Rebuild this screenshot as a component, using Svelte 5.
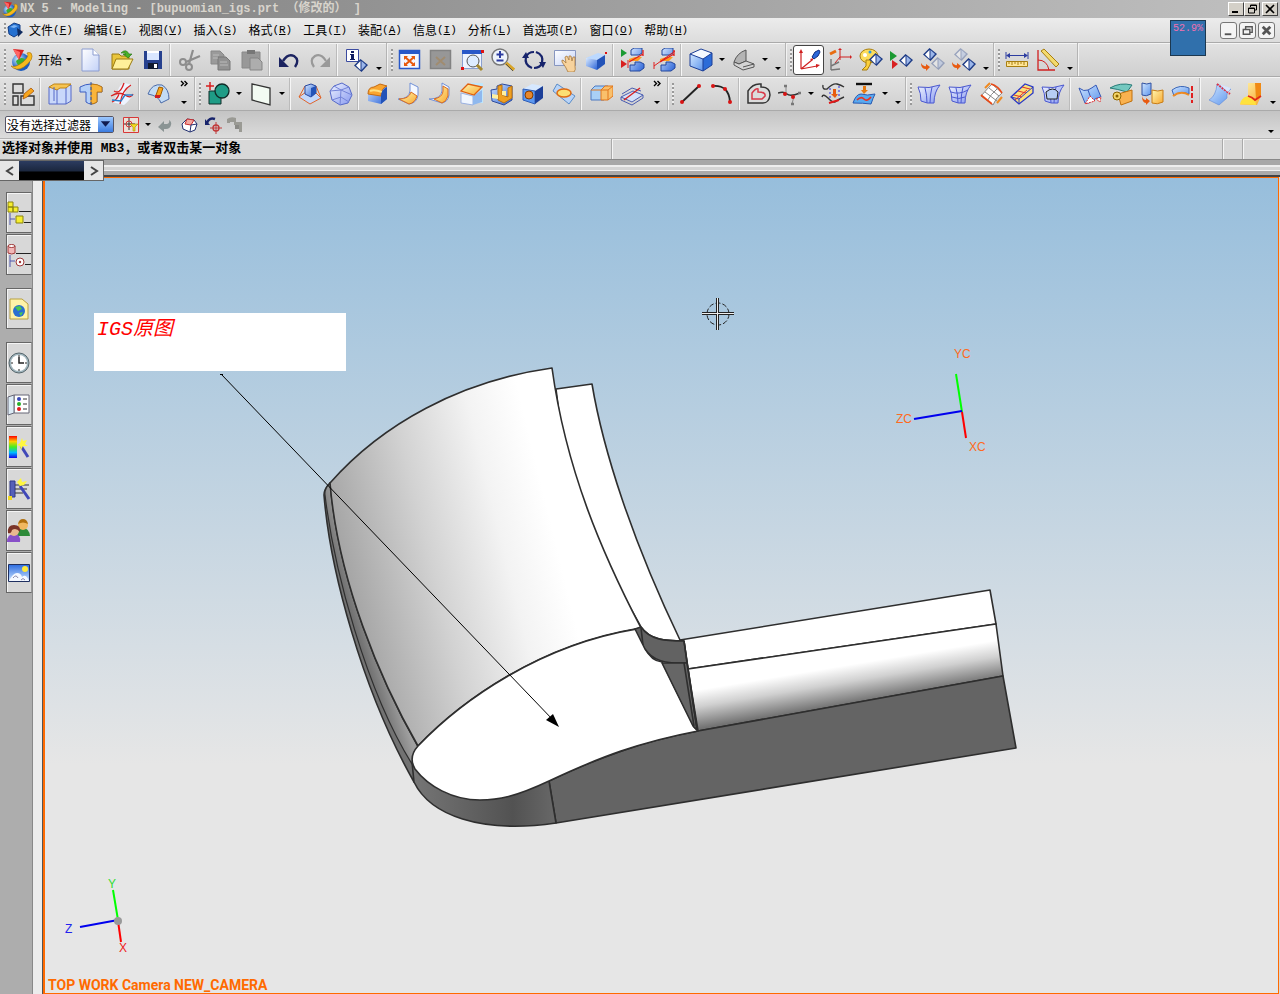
<script lang="ts">
  type Tool = { t: 'btn' | 'sep' | 'drop' | 'end' | 'chev'; name?: string; icon?: string; on?: boolean };

  const menus = [
    ['文件', 'F'], ['编辑', 'E'], ['视图', 'V'], ['插入', 'S'], ['格式', 'R'], ['工具', 'T'],
    ['装配', 'A'], ['信息', 'I'], ['分析', 'L'], ['首选项', 'P'], ['窗口', 'O'], ['帮助', 'H'],
  ];

  const diamond = (x: number, y: number, faded = false) =>
    `<g transform="translate(${x} ${y})" opacity="${faded ? 0.35 : 1}"><path d="M0 6.500L6.500 0L14 6L7.500 13Z" fill="#1d3b86"/><path d="M2 6.500L6.500 2V11Z" fill="#fff"/><path d="M7.500 2L12 6L7.500 11Z" fill="#9bb6ea"/></g>`;
  const clipBody =
    '<path d="M10 2l3-2h8v5l-3 2h-8zM9 17h5v-3h5l4 2v4l-4 3H9z" fill="url(#blue)" stroke="#23469c"/><path d="M8 11l6-2h7l-4 4H8z" fill="#ff9c20"/><path d="M8 14L22 6M22 2v6" stroke="#e02020" stroke-width="1.300"/>';
  const sheet = (more: string) =>
    `<path d="M1 5Q12 7 23 3Q17 10 17 21Q10 22 4 19Q4 11 1 5Z" fill="url(#lilac)" stroke="#4a58d0"/><path d="M8 6Q10 13 10 21M15 5Q13 13 13 21" fill="none" stroke="#4a58d0"/>${more}`;

  const icons: Record<string, string> = {
    start:
      '<circle cx="11" cy="14" r="9" fill="url(#ball)"/><path d="M6 13q4-5 9-2l-3 8q-5-1-6-6z" fill="#38b030"/><path d="M1 18Q6 24 14 19Q25 11 21 5Q19 4 17 5Q20 8 13 14Q5 20 1 18Z" fill="#f6b91c" stroke="#a86c00" stroke-width=".6"/><path d="M3 1l11 1-5 10z" fill="#d81f1f"/><path d="M3 1l7 3-1 8z" fill="#f66"/>',
    create: '<path d="M3 1h11l6 6v16H3z" fill="url(#paper)" stroke="#8b9cd0"/><path d="M14 1v6h6" fill="#fff" stroke="#8b9cd0"/>',
    open: '<path d="M2 21V6h7l2 2h8v13z" fill="#e9c53c" stroke="#9a7a10"/><path d="M2 21L6 11h17l-5 10z" fill="#fff09a" stroke="#9a7a10"/><path d="M11 5q5-5 8 1h3l-4 4-5-4h3q-2-2-5-1z" fill="#46b028" stroke="#237010" stroke-width=".6"/>',
    save: '<path d="M3 3h18v18H3z" fill="#27418e"/><path d="M6 3h12v9H6z" fill="#d9e6ff"/><path d="M6 3h12v2H6z" fill="#fff"/><path d="M7 15h10v6H7z" fill="#111a30"/><path d="M13 16h3v4h-3z" fill="#fff"/>',
    cut: '<path d="M15 2L11 16M22 8L8 14" stroke="#8d8d8d" stroke-width="2.200"/><circle cx="5" cy="14" r="3" fill="none" stroke="#8d8d8d" stroke-width="2"/><circle cx="11" cy="19" r="3" fill="none" stroke="#8d8d8d" stroke-width="2"/>',
    copy: '<path d="M2 3h9l4 4v9H2z" fill="#9a9a9a" stroke="#888"/><path d="M9 9h8l4 4v9H9z" fill="#929292" stroke="#777"/><path d="M4 7h6M4 10h5M11 14h7M11 17h8" stroke="#bbb"/>',
    paste: '<path d="M2 4h18v16H2z" fill="#989898" stroke="#888"/><path d="M7 2h8v4H7z" fill="#777"/><path d="M10 10h8l4 4v8H10z" fill="#adadad" stroke="#858585"/>',
    undo: '<path d="M6 13Q11 5 17 8Q23 12 18 19" fill="none" stroke="#1b2360" stroke-width="2.400"/><path d="M2 9v10h10z" fill="#1b2360"/>',
    redo: '<path d="M18 13Q13 5 7 8Q1 12 6 19" fill="none" stroke="#999" stroke-width="2.200"/><path d="M22 9v10H12z" fill="#999"/>',
    info: '<path d="M1.500 1.500h12v12h-12z" fill="#fff" stroke="#3b4ba0"/><path d="M6 6h3v5h1v1H5v-1h1V7H5V6zM6 3h3v2H6z" fill="#101c60"/>' + diamond(9, 11),
    fit: '<path d="M1.500 2.500h20v18h-20z" fill="#f2f6ff" stroke="#2858c8" stroke-width="1.500"/><path d="M1 2h21v4H1z" fill="#2858c8"/><path d="M7 9l9 8M16 9L7 17" stroke="#e8590c" stroke-width="2"/><path d="M6 8h4L6 12zM17 8h-4l4 4zM6 18h4l-4-4zM17 18h-4l4-4z" fill="#e8590c"/>',
    fitsel: '<path d="M1.500 2.500h20v18h-20z" fill="#979797" stroke="#828282" stroke-width="1.500"/><path d="M7 9l9 8M16 9L7 17" stroke="#a08c70" stroke-width="2"/>',
    zoombox: '<path d="M2.500 2.500h19v18h-19z" fill="#eef4ff" stroke="#8aa0d0"/><path d="M2 2h20v4H2z" fill="#2858c8"/><circle cx="13" cy="13" r="6" fill="#ddecff" stroke="#555"/><path d="M17 17l5 5" stroke="#a68a30" stroke-width="3"/><path d="M1 19h3v3H1zM21 2h3v3h-3z" fill="#e01010"/>',
    zoom: '<circle cx="9" cy="9" r="8" fill="#eef4fb" stroke="#777" stroke-width="1.500"/><path d="M9 3v7M5.500 6.500h7M5.500 12.500h7" stroke="#2c3ca0" stroke-width="2"/><path d="M15 15l8 7" stroke="#d8a428" stroke-width="3.500"/><path d="M15 16l7 7" stroke="#555"/>',
    rotate: '<path d="M10 20Q2 17 4 9Q6 4 12 4M14 4Q22 7 20 15Q18 20 12 20" fill="none" stroke="#17246c" stroke-width="2.200"/><path d="M0 10h7L4 4zM17 14h7l-3 6z" fill="#17246c"/>',
    pan: '<path d="M1.500 2.500h21v15h-21z" fill="url(#paper)" stroke="#8796c0"/><path d="M9 12q2 0 4 3l-1-6 2-1 2 4 0-4 2 0 1 5 1-4 2 0v9q1 4-1 6h-6q-2-5-6-10z" fill="#f7d29c" stroke="#a87a3c" stroke-width=".8"/>',
    persp: '<path d="M2 10l12-5 7 2-8 5z" fill="#bcd9ff"/><path d="M2 10l11 2v10L2 18z" fill="url(#blue)"/><path d="M13 12l8-5v9l-8 6z" fill="#2353b8"/><path d="M21 4h2v2h-2z" fill="#e01010"/>',
    clipA: '<path d="M0 1l6 4-6 4z" fill="#1b9a32"/><path d="M0 12l6 4-6 4z" fill="#d82020"/><path d="M7 12v8" stroke="#e02020"/>' + clipBody,
    clipB: clipBody + '<path d="M2 18L23 3M2 14v7" stroke="#e02020"/>',
    shaded: '<path d="M1 6L12 1l11 4-9 6z" fill="#f4f9ff"/><path d="M1 6l13 5v12L1 18z" fill="url(#sky)"/><path d="M14 11l9-6v12l-9 6z" fill="#2c6cd8"/><path d="M1 6L12 1l11 4v12l-9 6-13-5zM1 6l13 5v12M14 11l9-6" fill="none" stroke="#1c3f98"/>',
    ghost: '<path d="M2 14Q5 5 14 2v11l-7 3z" fill="#b4b4b4" stroke="#555"/><path d="M2 14l5 2 7-3 8 3v3l-11 3-9-5zM11 19l11-3" fill="#d4d4d4" stroke="#555"/>',
    wcs: '<path d="M4 21V4M4 21l16-3M4 21l11-9" stroke="#d02020" fill="none" stroke-width="1.200"/><path d="M4 1l2 4H2zM23 17l-4-1v4zM17 10l-4 1 2 2z" fill="#d02020"/><path d="M15 9l3-5 4-2 1 2-2 4-4 3z" fill="#2a66d8" stroke="#122e80"/>',
    wcs2: '<path d="M12 12V2M12 9h10M12 9l-5 6" stroke="#d02020" fill="none"/><path d="M2 6l6-3" stroke="#e86c10" stroke-width="3"/><path d="M3 22V11M3 22l9-1M3 18l8-4" stroke="#777" fill="none" stroke-width="1.400"/><path d="M22 7l2 2-2 2zM10 2l2-2 2 2z" fill="#d02020"/>',
    palette: '<ellipse cx="10" cy="8" rx="9" ry="7" fill="#fbdc5c" stroke="#a87e10"/><circle cx="6" cy="7" r="2" fill="#fff"/><circle cx="11" cy="4" r="1.500" fill="#2a9ae0"/><path d="M7 12h5l-1 5-3 5-5 0 4-4z" fill="#fbd03c" stroke="#a87e10"/>' + diamond(10, 5),
    showhide: '<path d="M0 3l7 5-7 5z" fill="#1b9a32"/><path d="M2 12l6 4-6 5z" fill="#d82020"/>' + diamond(9, 6),
    hide: diamond(2, 0) + diamond(10, 9, true) + '<path d="M0 15q2 4 5 3v-2l4 3-4 4v-2q-5 0-5-6z" fill="#e85a10"/>',
    show: diamond(2, 0, true) + diamond(10, 10) + '<path d="M0 14q2 4 5 3v-2l4 3-4 4v-2q-5 0-5-6z" fill="#e85a10"/>',
    ruler: '<path d="M1 4v7M23 4v7M2 7.500h20" stroke="#2c3ca0"/><path d="M1 7.500l4-2.500v5zM23 7.500l-4-2.500v5z" fill="#2c3ca0"/><path d="M1.500 13.500h21v5h-21z" fill="#ffe596" stroke="#a87e10"/><path d="M4 14v2M7 14v3M10 14v2M13 14v3M16 14v2M19 14v3" stroke="#a87e10"/>',
    angle: '<path d="M2 2v20h17" fill="none" stroke="#d02020" stroke-width="1.300"/><path d="M2 12q9 0 11 10" fill="none" stroke="#d02020"/><path d="M5 3l3-2 15 15-3 3z" fill="#f3da6c" stroke="#a87e10"/>',

    layout: '<path d="M2 2h10v9H2zM2 14h5v9H2zM10 14h13v9H10z" fill="#dcdcdc" stroke="#333" stroke-width="1.400"/><path d="M12 17l1-5 7-6 3 3-7 6z" fill="#f7a51c" stroke="#a04a00" stroke-width=".7"/>',
    extrude: '<path d="M1 5h12l10-2v16l-5 3H1z" fill="#c9d8fa" stroke="#5468c8"/><path d="M1 5l5-3h17l-5 4h-6L9 8z" fill="#f6c452" stroke="#c08414"/><path d="M9 8v14M6 5v14M18 6v16" stroke="#5468c8"/>',
    revolve: '<path d="M1 5q11-6 22 0v5h-5v10q-6 4-11 0V10H1z" fill="#b4d0f8" stroke="#3a5cc0"/><path d="M12 2q7 0 11 3v5h-5v10q-3 2-6 2z" fill="#f9b53c" stroke="#c07a10"/><path d="M12 0v24" stroke="#2858b0" stroke-dasharray="3 2"/>',
    sweep: '<path d="M8 8Q10 2 15 1L22 3Q17 5 15 12L23 13Q18 20 14 23L2 20Q8 13 8 8Z" fill="#eef4ff"/><path d="M4 9Q10 13 14 1M2 20Q7 18 9 12M10 22Q12 8 21 3M1 14Q9 9 15 13T23 12" fill="none" stroke="#d82020" stroke-width="1.300"/><path d="M2 18l9 1 4-6h8" stroke="#2c7cc8" fill="none" stroke-width="1.400"/>',
    sheetbody: '<path d="M1 12Q5 1 15 3Q22 7 22 17L14 21Q12 14 1 12Z" fill="#c3dcf5" stroke="#4a6aa8"/><path d="M9 13l3-8 4 1-3 9z" fill="#f7a51c" stroke="#a05a00"/><path d="M8 13h5v3H8z" fill="#d02020"/>',
    sketch: '<path d="M3 9h12v13H3z" fill="#1f9c86" stroke="#102c28"/><circle cx="16" cy="9" r="7" fill="#1f9c86" stroke="#102c28" stroke-width="1.300"/><path d="M0 4h8M4 0v8" stroke="#d82020" stroke-width="1.500"/>',
    datum: '<path d="M3 2l18 4v17L3 18z" fill="#f3fbf3" stroke="#333" stroke-width="1.300"/>',
    pyramid: '<path d="M1 15l7-5h9l6 6-11 6z" fill="#c4d8fa" stroke="#e0662c"/><path d="M7 4L1 15M18 4l5 12" stroke="#e0662c"/><path d="M7 4l6-2 5 2v7l-5 4-6-3z" fill="url(#blue)" stroke="#2848a0"/><path d="M13 6l5-2v7l-5 4z" fill="#2353b8"/>',
    gem: '<path d="M5 4l8-3 7 4 3 8-4 8-8 2-8-5L1 9z" fill="url(#lilac)" stroke="#5468c8"/><path d="M5 4l7 4 8-3M12 8l-1 15M12 8l11 5M1 9l11-1M3 18l9-3 8 5" fill="none" stroke="#7484d8"/>',
    blend: '<path d="M2 12q0-7 6-7l6-3 7 2v13l-6 5-13-3z" fill="url(#blue)"/><path d="M2 12q0-7 6-7l6-3 7 2q-6 2-6 10z" fill="#f9a530" stroke="#c86c10"/><path d="M4 9q4-2 12 1" fill="none" stroke="#ffe080" stroke-width="2"/><path d="M15 14q0-6 6-9v12l-6 5z" fill="#2353b8"/>',
    flangeA: '<path d="M13 1l8 4v8q-1 8-9 9L1 17q11 0 12-8z" fill="#f4f8ff" stroke="#7090d8"/><path d="M14 10l6 4q-2 7-8 8L2 17q10 0 12-7z" fill="url(#gold)" stroke="#d86a20"/>',
    flangeB: '<path d="M14 1l7 4v8q-1 7-7 8L1 17q12 0 13-8z" fill="#f4f8ff" stroke="#7090d8"/><path d="M15 4l5 3v7q-2 6-6 7L6 17q9-2 9-8z" fill="url(#gold)" stroke="#d86a20"/>',
    chamfer: '<path d="M12 1h12v20H14z" fill="#bfe6fb"/><path d="M2 11l12 3v9L2 21z" fill="#f0f6ff" stroke="#9ab0e0"/><path d="M14 14l9-6v12l-9 3z" fill="#8fb8ee"/><path d="M2 9L9 2l14 3-8 8z" fill="url(#gold)" stroke="#e06010" stroke-width="1.300"/>',
    pocket: '<path d="M1 8l6-1V4l5-2 10 2v14l-8 5-12-4z" fill="url(#blue)" stroke="#2c4a9c"/><path d="M8 4l4-1v10l6 2V6l4-2v12l-8 5-6-3z" fill="#f0a020" stroke="#b87010"/><path d="M2 12l6 1v4l-6-1z" fill="#fff0a0"/><path d="M12 9h4v5l-4-1z" fill="#fff0a0"/>',
    hole: '<path d="M2 7l9-5 11 2-8 5z" fill="#d6e8ff"/><path d="M2 7l12 2v13L2 18z" fill="#5c98f0" stroke="#2c5cb8"/><path d="M14 9l8-5v12l-8 6z" fill="#1c3f98"/><circle cx="8" cy="13" r="4" fill="#e8882c" stroke="#843c00"/>',
    trim: '<path d="M1 9l4-7 18 12-6 8z" fill="#b8d4f8" stroke="#5a8cc8"/><ellipse cx="12" cy="11" rx="7" ry="4" fill="#fbdf74" stroke="#e06a10" stroke-width="1.500"/>',
    pad: '<path d="M2 8l4-4h13l-4 4v10H2z" fill="#a9d0f6" stroke="#4c78c0"/><path d="M12 8l4-4h8v10l-5 4h-7z" fill="#f9c06c" stroke="#e0761c"/><path d="M2 8h17l5-4M19 8v10" fill="none" stroke="#e0761c"/>',
    split: '<path d="M1 15l12-6 10 4-11 7z" fill="#d4e2fa" stroke="#4a5cb0"/><path d="M1 15v3l11 5 11-7v-3M2 12l10-6 9 3" fill="none" stroke="#4a5cb0"/><path d="M4 18L20 6" stroke="#d82020" stroke-width="1.400"/>',
    line: '<path d="M3 20L20 4" stroke="#222" stroke-width="1.800"/><circle cx="3" cy="20" r="2" fill="#d81414"/><circle cx="20" cy="4" r="2" fill="#d81414"/>',
    arc: '<path d="M3 4Q19 3 20 20" fill="none" stroke="#222" stroke-width="1.800"/><circle cx="3" cy="4" r="2" fill="#d81414"/><circle cx="15" cy="7" r="2" fill="#d81414"/><circle cx="20" cy="20" r="2" fill="#d81414"/>',
    offset: '<path d="M1 21V9q5-8 13-7v3q9 0 9 8-1 8-7 8z" fill="#dcdcdc" stroke="#333" stroke-width="1.500"/><path d="M5 17v-6q4-5 6-4v3q8 0 7 4l-3 3z" fill="none" stroke="#d83848" stroke-width="1.500"/>',
    spline: '<path d="M0 11q6-2 9 1t13-1" fill="none" stroke="#333" stroke-width="1.500"/><path d="M8 12V3M16 14l-2 8" stroke="#888"/><circle cx="7" cy="12" r="2" fill="#d81414"/><circle cx="15" cy="15" r="2" fill="#d81414"/><path d="M6 4h3M13 22h3M20 11h3" stroke="#777" stroke-width="2.500"/>',
    bridge: '<path d="M2 3Q1 8 6 7Q12 1 16 2T23 5M1 15Q2 11 7 16T14 20M23 15Q18 17 14 20" fill="none" stroke="#333" stroke-width="1.400"/><path d="M9 6v11M18 4v12" stroke="#2828e0" stroke-dasharray="2 2"/><path d="M12 7h3v5h2l-3 4-4-4h2z" fill="#e85a10"/><path d="M8 21l10-3" stroke="#e01818" stroke-width="2"/>',
    project: '<path d="M4 2h16" stroke="#111" stroke-width="2.400"/><path d="M11 4h3v4h2l-4 4-3-4h2z" fill="#e87a10"/><path d="M1 21q3-9 8-9 6 2 14 0-2 4-4 10-8-1-18-1z" fill="#58aaf0" stroke="#2858b0"/><path d="M5 18q4-4 7-1t7-2" fill="none" stroke="#e83020" stroke-width="1.700"/>',
    ruled: sheet(''),
    mesh: sheet('<path d="M3 10q8 3 17-2M4 15q7 3 13 0" fill="none" stroke="#4a58d0"/>'),
    swept: '<path d="M2 14Q9 6 13 2L23 11Q17 15 14 23z" fill="#fff" stroke="#888"/><path d="M6 10l12 9M10 6l10 8M8 19q4-7 10-12" fill="none" stroke="#888"/><path d="M2 13l11 9M12 2q7 2 11 9" fill="none" stroke="#e84a18" stroke-width="1.700"/><path d="M6 6l5-5M18 21l5-6" stroke="#f08a20" stroke-width="2"/>',
    section: '<path d="M1 15L15 2l8 3v6L9 22z" fill="#fbe27a" stroke="#2838c8" stroke-width="1.300"/><path d="M1 15l8 2L23 5M9 17v5" fill="none" stroke="#2838c8"/><path d="M4 13l8 2M8 9l8 2M12 5l8 2M5 18l12-10" stroke="#e03030"/>',
    nside: sheet('<path d="M5 10q7-6 12 0l-1 7H6z" fill="#b6cdf4" stroke="#222"/>'),
    fold: '<path d="M1 6q5 4 9 2t8-5l5 12q-6 1-9 4t-7 2z" fill="url(#sky)" stroke="#3458b8"/><path d="M10 8l4 11" stroke="#3458b8"/><path d="M7 22l5-8 5 5zM18 17l5-2-1 5z" fill="#fff" stroke="#e03030" stroke-dasharray="2 1"/>',
    law: '<path d="M1 6Q11 0 23 3l-5 7Q8 7 1 6z" fill="#74c8c0" stroke="#287c78"/><path d="M9 12L23 8v11l-11 4z" fill="#f9b250" stroke="#c0700c"/><circle cx="8" cy="14" r="4" fill="#f4d468" stroke="#8a6400"/><circle cx="8" cy="14" r="1.500" fill="#8a6400"/>',
    thick: '<path d="M2 1q5 2 9 0v11q-5 3-9 1z" fill="url(#sky)" stroke="#3050a0"/><path d="M12 8q6 2 11 0v12q-6 3-11 1z" fill="url(#gold)" stroke="#c87c14"/><path d="M2 14q1 4 4 4v-2l4 3-4 4v-2q-4 0-4-7z" fill="#e85a10"/>',
    enlarge: '<path d="M1 8Q9 2 18 6v6Q9 8 3 14z" fill="url(#sky)" stroke="#3a66b8"/><path d="M2 14q8-6 16-1" fill="none" stroke="#f08a20" stroke-width="2"/><path d="M21 4v17" stroke="#e02020" stroke-width="2" stroke-dasharray="5 2"/>',
    trimsheet: '<path d="M9 2l14 5q-5 3-4 9l-8 7L1 18q7-4 8-16z" fill="url(#sky)" stroke="#5a86d8" stroke-width=".6"/><path d="M9 2l13 10" stroke="#e03040" stroke-width="2" stroke-dasharray="2 1"/><path d="M11 2l12 4-3 4z" fill="#d8e6fc"/>',
    body: '<path d="M9 1h13v13l-4 9H1q1-6 8-9z" fill="url(#gold)"/><path d="M16 1h6v13l-5 3z" fill="#f08a14"/><path d="M1 22q1-6 8-8l7 3 1 6z" fill="#ffe23c"/><path d="M9 14q4 1 7 4l6-4" fill="none" stroke="#e02818" stroke-width="1.800"/>',
  };

  const b = (name: string, on = false): Tool => ({ t: 'btn', name, icon: icons[name], on });
  const sep: Tool = { t: 'sep' };
  const drop: Tool = { t: 'drop' };
  const end: Tool = { t: 'end' };
  const chev: Tool = { t: 'chev' };

  const bars: Tool[][][] = [
    [
      [b('create'), b('open'), b('save'), sep, b('cut'), b('copy'), b('paste'), sep, b('undo'), b('redo'), sep, b('info'), end],
      [b('fit'), b('fitsel'), b('zoombox'), b('zoom'), b('rotate'), b('pan'), b('persp'), sep, b('clipA'), b('clipB'), sep, b('shaded'), drop, b('ghost'), drop, end],
      [b('wcs', true), b('wcs2'), b('palette'), b('showhide'), b('hide'), b('show'), end],
      [b('ruler'), b('angle'), end],
    ],
    [
      [b('layout'), sep, b('extrude'), b('revolve'), b('sweep'), sep, b('sheetbody'), chev],
      [b('sketch'), drop, b('datum'), drop, sep, b('pyramid'), b('gem'), sep, b('blend'), b('flangeA'), b('flangeB'), b('chamfer'), b('pocket'), b('hole'), b('trim'), sep, b('pad'), b('split'), chev],
      [b('line'), b('arc'), sep, b('offset'), b('spline'), drop, b('bridge'), b('project'), drop, end],
      [b('ruled'), b('mesh'), b('swept'), b('section'), b('nside'), sep, b('fold'), b('law'), b('thick'), b('enlarge'), sep, b('trimsheet'), b('body'), end],
    ],
  ];

  const tabs = [
    { name: 'Assembly Navigator', icon: '<path d="M1 1h5v5H1zM1 6h5v5H1zM6 6h5v5H6zM9 15h7v7H9z" fill="#f6ee30" stroke="#8a8410"/><path d="M3 12v12M3 18h5" stroke="#5058b0" fill="none"/><path d="M12 10.500h12M17 21.500h7" stroke="#222"/>' },
    { name: 'Part Navigator', icon: '<path d="M1 3v7q4 2 7 0V3z" fill="#f2b8b8" stroke="#a03838"/><ellipse cx="4.500" cy="3" rx="3.500" ry="1.500" fill="#fff" stroke="#a03838"/><circle cx="13" cy="19" r="4" fill="#fff" stroke="#a03838"/><circle cx="13" cy="19" r="1.200" fill="#a03838"/><path d="M3 12v12M3 18h5" stroke="#5058b0"/><path d="M9 10.500h15M18 21.500h6" stroke="#222"/>' },
    { name: 'Internet', gap: true, icon: '<path d="M3 2h12l6 5v15H3z" fill="#fff3a8" stroke="#b8a040"/><circle cx="12" cy="14" r="6" fill="#2b6fd0"/><path d="M8 10l5-1 2 3-4 2zM12 16l4-1-2 4z" fill="#4cc850"/>' },
    { name: 'History', gap: true, icon: '<circle cx="12" cy="12" r="10" fill="#9fb4bc" stroke="#56666c"/><circle cx="12" cy="12" r="8" fill="#fff"/><path d="M12 6v6h5" fill="none" stroke="#222" stroke-width="1.500"/><path d="M12 4v2M12 18v2M4 12h2M18 12h2" stroke="#222"/>' },
    { name: 'Palettes', icon: '<path d="M7 2h15v18H7z" fill="#fff" stroke="#667"/><path d="M1 4l6-2v18l-6 2z" fill="#dcebf5" stroke="#667"/><circle cx="12" cy="6" r="2" fill="#3848b8"/><circle cx="12" cy="11" r="2" fill="#28b028"/><circle cx="12" cy="16" r="2" fill="#e01c1c"/><path d="M16 6h4M16 11h4M16 16h4" stroke="#333"/>' },
    { name: 'Materials', icon: '<path d="M2 1h8v22H2z" fill="url(#rainbow)"/><path d="M14 11l7 11" stroke="#4048b8" stroke-width="3"/><path d="M15 3l1 3 4-1-2 4 3 2-5 0-2 4-1-4-3-1 3-2z" fill="#fff740"/>' },
    { name: 'Process Studio', icon: '<path d="M3 4h5v16H3z" fill="#5660b8" stroke="#303888"/><path d="M8 8h14M8 12h12M8 16h8" stroke="#333"/><path d="M13 9l9 13" stroke="#4048b8" stroke-width="3"/><path d="M14 1l1 4 5-1-3 4-4 1-3-4z" fill="#fff740"/><path d="M1 19h4v4H1z" fill="#f0d820"/>' },
    { name: 'Roles', icon: '<path d="M10 17q0-8 6-8t7 8z" fill="#2d8a38"/><circle cx="16" cy="6" r="5" fill="#f0b860"/><path d="M11 5q1-5 5-5t5 5q-5-3-10 0z" fill="#b07010"/><path d="M0 23q0-8 7-8t6 8z" fill="#8850c8"/><circle cx="7" cy="12" r="5" fill="#eab890"/><path d="M1 14q-1-8 6-8t6 7q-4-5-8-2-1 4-4 3z" fill="#7a3428"/>' },
    { name: 'Scene', icon: '<path d="M1.500 3.500h21v17h-21z" fill="url(#scene)" stroke="#203060"/><circle cx="18" cy="8" r="3" fill="#ffe838"/><path d="M2 20q4-8 8-8t5 4q4-4 7 4z" fill="#f4f8ff"/><path d="M6 17q3-4 5 0M14 19q2-3 4 0" stroke="#88a" fill="none"/>' },
  ];
</script>

<svelte:head><title>NX 5 - Modeling</title></svelte:head>

{#snippet glyph(body: string)}
  <svg class="glyph" viewBox="0 0 24 24" aria-hidden="true">{@html body}</svg>
{/snippet}

<div class="app">
  <svg class="defs" aria-hidden="true">
    <defs>
      <linearGradient id="blue" x1="0" y1="0" x2="1" y2="1"><stop offset="0" stop-color="#d6e8ff" /><stop offset="1" stop-color="#2c64d8" /></linearGradient>
      <linearGradient id="sky" x1="0" y1="0" x2="1" y2="1"><stop offset="0" stop-color="#d0e6ff" /><stop offset="1" stop-color="#5c94ec" /></linearGradient>
      <linearGradient id="lilac" x1="0" y1="0" x2="1" y2="1"><stop offset="0" stop-color="#f0f4ff" /><stop offset="1" stop-color="#8698f0" /></linearGradient>
      <linearGradient id="gold" x1="0" y1="0" x2="1" y2="1"><stop offset="0" stop-color="#fff7b0" /><stop offset="1" stop-color="#f8a830" /></linearGradient>
      <linearGradient id="paper" x1="0" y1="0" x2="1" y2="1"><stop offset="0" stop-color="#fff" /><stop offset="1" stop-color="#c3d2f8" /></linearGradient>
      <linearGradient id="rainbow" x2="0" y2="1"><stop offset="0" stop-color="#f00" /><stop offset=".25" stop-color="#fc0" /><stop offset=".5" stop-color="#4e2" /><stop offset=".75" stop-color="#0bf" /><stop offset="1" stop-color="#10e" /></linearGradient>
      <linearGradient id="scene" x2="0" y2="1"><stop offset="0" stop-color="#2c6ce0" /><stop offset="1" stop-color="#cfe6ff" /></linearGradient>
      <radialGradient id="ball" cx=".35" cy=".35"><stop offset="0" stop-color="#d4f4ff" /><stop offset="1" stop-color="#1c5cc0" /></radialGradient>
    </defs>
  </svg>

  <header class="titlebar">
    {@render glyph(icons.start)}
    <h1>NX 5 - Modeling - [bupuomian_igs.prt （修改的） ]</h1>
    <div class="winbtns">
      <button aria-label="Minimize"><svg viewBox="0 0 12 10"><path d="M2 8h6" stroke="#000" stroke-width="2" /></svg></button>
      <button aria-label="Restore"><svg viewBox="0 0 12 10"><path d="M4.500 3V1h6v5h-2M2.500 4h6v5h-6zM4 1.500h7M2 4.500h7" fill="none" stroke="#000" /></svg></button>
      <button class="close" aria-label="Close"><svg viewBox="0 0 12 10"><path d="M2 1l8 8M10 1l-8 8" stroke="#000" stroke-width="1.600" /></svg></button>
    </div>
  </header>

  <nav class="menubar">
    <span class="grip"></span>
    <svg class="part" viewBox="0 0 17 16" aria-hidden="true"><path d="M1 5l6-4 6 2v8l-6 4-5-3z" fill="#2470d0" stroke="#123c84" /><path d="M10 6l6 4-5 5z" fill="#102c60" /><path d="M3 5l4-2 4 1-4 2z" fill="#7cb4f4" /></svg>
    {#each menus as [label, key]}
      <button class="menu">{label}<span>(<u>{key}</u>)</span></button>
    {/each}
    <div class="docbtns">
      <button aria-label="Minimize document"><svg viewBox="0 0 16 16"><path d="M4 12h7" stroke="#555" stroke-width="2" /></svg></button>
      <button aria-label="Restore document"><svg viewBox="0 0 16 16"><path d="M6 6V4h7v6h-2M3.500 7h7v5h-7zM3 7h8" fill="none" stroke="#555" stroke-width="1.500" /></svg></button>
      <button aria-label="Close document"><svg viewBox="0 0 16 16"><path d="M4 4l8 8M12 4l-8 8" stroke="#555" stroke-width="3" /></svg></button>
    </div>
    <div class="meter">52.9%</div>
  </nav>

  {#each bars as groups, row}
    <div class="toolbar" role="toolbar" aria-label={row ? 'Features' : 'Standard'}>
      {#each groups as group, g}
        <div class="group">
          <span class="grip"></span>
          {#if row === 0 && g === 0}
            <button class="start">{@render glyph(icons.start)}开始<i class="caret"></i></button>
          {/if}
          {#each group as tool}
            {#if tool.t === 'btn'}
              <button class="tool" class:on={tool.on} aria-label={tool.name}>{@render glyph(tool.icon ?? '')}</button>
            {:else if tool.t === 'sep'}
              <span class="sep"></span>
            {:else if tool.t === 'drop'}
              <button class="drop" aria-label="More"><i class="caret"></i></button>
            {:else}
              <button class="end" class:chev={tool.t === 'chev'} aria-label="Toolbar options">
                {#if tool.t === 'chev'}<svg viewBox="0 0 8 7"><path d="M1 1l2.500 2.500L1 6M4.500 1L7 3.500 4.500 6" fill="none" stroke="#000" stroke-width="1.400" /></svg>{/if}
                <i class="caret"></i>
              </button>
            {/if}
          {/each}
        </div>
      {/each}
    </div>
  {/each}

  <div class="selbar">
    <div class="combo">
      <select aria-label="选择过滤器"><option>没有选择过滤器</option></select>
      <svg viewBox="0 0 16 15" aria-hidden="true"><path d="M3 4h10l-5 6z" fill="#111c50" /></svg>
    </div>
    <button class="selbtn" aria-label="Snap point"><svg viewBox="0 0 18 18"><path d="M1.500 1.500h15v15h-15z" fill="#ece0d8" stroke="#d83838" /><path d="M7 2v12M2 8h11" stroke="#333" /><circle cx="7" cy="8" r="3" fill="none" stroke="#d83838" /><path d="M8 8h8l-3 3v4h-2v-4z" fill="#f4dc20" stroke="#a88c00" stroke-width=".6" /></svg></button>
    <button class="drop" aria-label="More"><i class="caret"></i></button>
    <button class="selbtn" aria-label="Back"><svg viewBox="0 0 18 18"><path d="M8 5v3h3q3-1 2-4 3 2 2 5-1 4-5 4H8v3L2 11z" fill="#8a9494" /></svg></button>
    <button class="selbtn wide" aria-label="Solid"><svg viewBox="0 0 18 18"><path d="M2 8l5-5 7 1 3 4-2 6-5 2-7-3z" fill="#fff" stroke="#223070" /><path d="M7 3l7 1-3 5-6-1z" fill="#f4a8a0" stroke="#c83030" /><path d="M11 9l-1 7M11 9l6-1" stroke="#223070" /></svg></button>
    <button class="selbtn" aria-label="Rotate point"><svg viewBox="0 0 18 18"><path d="M3 7q2-6 8-4" fill="none" stroke="#18246c" stroke-width="2.500" /><path d="M1 3v6h5z" fill="#18246c" /><circle cx="12" cy="12" r="3" fill="none" stroke="#c03838" stroke-width="1.400" /><path d="M12 6v12M6 12h12" stroke="#c03838" /></svg></button>
    <button class="selbtn" aria-label="Tool"><svg viewBox="0 0 18 18"><path d="M1 3q4-3 9-1v4l6 0v10h-3V9H8V6H4v1H1z" fill="#9a9a94" /><path d="M9 9h4v4H9z" fill="#8a8a86" /></svg></button>
    <button class="end last" aria-label="Toolbar options"><i class="caret"></i></button>
  </div>

  <div class="status">
    <p>选择对象并使用 MB3，或者双击某一对象</p>
    <span class="cell"></span>
    <span class="cell small"></span>
    <span class="cell tail"></span>
  </div>

  <div class="strip">
    <div class="scroller">
      <button aria-label="Previous"><svg viewBox="0 0 12 12"><path d="M9 2L3 6l6 4" fill="none" stroke="#444" stroke-width="2" /></svg></button>
      <span class="track"></span>
      <button aria-label="Next"><svg viewBox="0 0 12 12"><path d="M3 2l6 4-6 4" fill="none" stroke="#444" stroke-width="2" /></svg></button>
    </div>
  </div>

  <div class="work">
    <aside>
      {#each tabs as tab}
        <button class="tab" class:gap={tab.gap} aria-label={tab.name}>{@render glyph(tab.icon)}</button>
      {/each}
    </aside>
    <div class="edge"></div>
    <main>
      <svg class="scene" role="img" aria-label="Model view">
        <defs>
          <linearGradient id="wall" gradientUnits="userSpaceOnUse" x1="345" y1="560" x2="548" y2="510">
            <stop offset="0" stop-color="#a6a6a6" /><stop offset=".4" stop-color="#d2d2d2" /><stop offset=".75" stop-color="#f3f3f3" /><stop offset="1" stop-color="#fff" />
          </linearGradient>
          <linearGradient id="side" gradientUnits="userSpaceOnUse" x1="352" y1="640" x2="378" y2="632">
            <stop offset="0" stop-color="#606060" /><stop offset="1" stop-color="#a0a0a0" />
          </linearGradient>
          <linearGradient id="arm" gradientUnits="userSpaceOnUse" x1="838" y1="650" x2="847" y2="704">
            <stop offset=".3" stop-color="#fff" /><stop offset=".6" stop-color="#d0d0d0" /><stop offset="1" stop-color="#727272" />
          </linearGradient>
          <linearGradient id="rim" gradientUnits="userSpaceOnUse" x1="412" y1="0" x2="556" y2="0">
            <stop offset="0" stop-color="#767676" /><stop offset=".7" stop-color="#525252" /><stop offset="1" stop-color="#686868" />
          </linearGradient>
        </defs>
        <g transform="translate(-45 -178)" stroke="#2e2e2e" stroke-width="1.600" stroke-linejoin="round">
          <path d="M556 389L592 384C603 450 632 540 680 640L684 641C665 641 650 640 641 627L570 500Z" fill="#fff" />
          <path d="M680 640L990 590L996 624L688 669L684 641Z" fill="#fff" />
          <path d="M688 669L996 624L1003 676L698 731Z" fill="url(#arm)" />
          <path d="M549 781C600 757 640 742 698 731L1003 676L1016 748L556 823Z" fill="#646464" />
          <path d="M330 483Q324 489 324 495C330 570 362 690 414 782L418 746Z" fill="#727272" />
          <path d="M330 483Q324 489 325 495C334 570 366 690 412 764L418 747C380 680 338 580 330 483Z" fill="url(#side)" stroke-width="1.200" />
          <path d="M412 762L414 782C430 815 480 834 556 823L549 781L480 780Z" fill="url(#rim)" />
          <path d="M330 483C382 424 460 381 552 368C566 470 602 553 641 628L635 629C540 645 462 700 418 746C380 680 338 580 330 483Z" fill="url(#wall)" />
          <path d="M418 746C462 700 540 645 637 629L645 648Q651 661 662 662L694 727L698 731C640 742 600 757 549 781C515 797 498 800 480 800C452 800 428 786 415 769Q408 757 418 746Z" fill="#fff" />
          <path d="M635 629L641 627C650 640 665 641 684 641L687 663C664 664 652 660 645 649Z" fill="#626262" />
          <path d="M641 628L643 645" fill="none" />
          <path d="M662 663H687L697 730L693 726Z" fill="#666" />
          <path d="M684 641L697 729M684 663L694 726" fill="none" />
        </g>
        <g transform="translate(-45 -178)" fill="none">
          <path d="M220 374.500h3M221 374L554 721" stroke="#000" />
          <path d="M559 727L546 720L553 714Z" fill="#000" />
          <g stroke="#222">
            <circle cx="718" cy="314" r="11" stroke-dasharray="5 2" />
            <path d="M702 312.500h32M702 314.500h32M716.500 298v32M718.500 298v32" />
            <path d="M702 313.500h32M717.500 298v32" stroke="#eee" />
          </g>
          <g stroke-width="2">
            <path d="M956 374L962 412" stroke="#0f0" />
            <path d="M914 419L962 411" stroke="#00e" />
            <path d="M962 412L966 438" stroke="#f00" />
          </g>
          <g class="axis" fill="#ff6a20">
            <text x="954" y="358">YC</text><text x="896" y="423">ZC</text><text x="969" y="451">XC</text>
          </g>
        </g>
      </svg>
      <div class="note">IGS原图</div>
      <svg class="triad" viewBox="0 0 70 80" aria-hidden="true">
        <g stroke-width="2"><path d="M49 14L54 44" stroke="#0f0" /><path d="M16 51L54 44" stroke="#00e" /><path d="M54 45L57 66" stroke="#f00" /></g>
        <circle cx="54" cy="45" r="4" fill="#999" />
        <g class="axis"><text x="44" y="12" fill="#3d3">Y</text><text x="1" y="57" fill="#22e">Z</text><text x="55" y="76" fill="#e22">X</text></g>
      </svg>
      <div class="camera">TOP WORK Camera NEW_CAMERA</div>
    </main>
  </div>
</div>

<style>
  :global(body) {
    margin: 0;
  }

  .app {
    display: flex;
    flex-direction: column;
    min-height: 100vh;
    background: #d8d8d8;
    color: #000;
    font: 12px 'Liberation Mono', 'Noto Sans CJK SC', monospace;
    overflow: hidden;
  }

  button {
    display: flex;
    align-items: center;
    justify-content: center;
    flex-shrink: 0;
    margin: 0;
    padding: 0;
    border: 0;
    background: none;
    color: inherit;
    font: inherit;
  }

  svg {
    display: block;
    flex-shrink: 0;
  }

  .defs {
    position: absolute;
    width: 0;
    height: 0;
  }

  .glyph {
    width: 24px;
    height: 24px;
  }

  .titlebar {
    display: flex;
    align-items: center;
    height: 18px;
    padding: 0 2px;
    background: linear-gradient(90deg, #808080, #c0c0c0);
  }

  .titlebar .glyph {
    width: 17px;
    height: 17px;
  }

  h1 {
    flex: 1;
    margin: 0 0 0 1px;
    color: #d8d4cc;
    font-size: 12px;
    line-height: 18px;
    white-space: pre;
  }

  .winbtns {
    display: flex;
  }

  .winbtns button {
    width: 16px;
    height: 14px;
    background: #d4d0c8;
    border: 1px solid;
    border-color: #fff #404040 #404040 #fff;
  }

  .winbtns svg {
    width: 12px;
    height: 10px;
  }

  .winbtns .close {
    margin-left: 2px;
  }

  .menubar {
    position: relative;
    display: flex;
    align-items: center;
    height: 24px;
    background: linear-gradient(#ececec, #dcdcdc);
    border-bottom: 1px solid #aaa;
  }

  .part {
    width: 17px;
    height: 16px;
    margin-right: 5px;
  }

  .menu {
    padding-right: 11px;
  }

  .menu span {
    font-size: 11px;
  }

  .docbtns {
    display: flex;
    gap: 2px;
    margin-left: auto;
    padding-right: 5px;
  }

  .docbtns button {
    width: 17px;
    height: 17px;
    border: 1px solid #777;
    border-radius: 3px;
    background: #f4f4f4;
  }

  .docbtns svg {
    width: 15px;
    height: 15px;
  }

  .meter {
    position: absolute;
    top: 2px;
    right: 74px;
    z-index: 2;
    width: 34px;
    height: 34px;
    border: 1px solid #1c3850;
    background: #3070ac;
    color: #f070b0;
    font-size: 10px;
    line-height: 15px;
    text-align: center;
  }

  .toolbar {
    display: flex;
    height: 33px;
    border-bottom: 1px solid #aaa;
    background: linear-gradient(#e2e2e2, #cfcfcf);
    box-shadow: inset 0 1px #f4f4f4;
  }

  .group {
    display: flex;
    align-items: center;
    border-right: 1px solid #b4b4b4;
    box-shadow: 1px 0 #f2f2f2;
  }

  .grip {
    flex-shrink: 0;
    width: 2px;
    height: 22px;
    margin: 0 1px 0 4px;
    background: repeating-linear-gradient(#999 0 2px, #eee 2px 4px);
  }

  .menubar .grip {
    height: 14px;
  }

  .start {
    gap: 4px;
    width: 68px;
  }

  .tool {
    width: 31px;
    height: 30px;
  }

  .tool.on {
    border: 1px solid #444;
    border-radius: 3px;
    background: #fff;
  }

  .sep {
    width: 1px;
    height: 32px;
    margin: 0 3px 0 2px;
    background: #f6f6f6;
    box-shadow: -1px 0 #bbb;
  }

  .caret {
    width: 0;
    height: 0;
    border: 3px solid transparent;
    border-top-color: #000;
    border-bottom: 0;
  }

  .drop {
    width: 12px;
    height: 30px;
  }

  .end {
    flex-direction: column;
    justify-content: flex-end;
    gap: 14px;
    width: 14px;
    height: 28px;
    padding-bottom: 4px;
    box-sizing: border-box;
  }

  .end.chev {
    width: 20px;
  }

  .end svg {
    width: 8px;
    height: 7px;
  }

  .selbar {
    display: flex;
    align-items: center;
    height: 27px;
    padding-left: 5px;
    border-bottom: 1px solid #b4b4b4;
    background: linear-gradient(#c4c4c4, #dcdcdc);
  }

  .combo {
    display: grid;
    grid-template-columns: 93px 16px;
    align-items: center;
    margin-right: 6px;
  }

  .combo select {
    grid-area: 1 / 1 / 2 / 3;
    appearance: none;
    height: 17px;
    margin: 0;
    padding: 1px 0 0 1px;
    border: 1px solid #556;
    border-radius: 2px;
    background: #fff;
    color: #000;
    font: 12px/14px 'Noto Sans CJK SC', sans-serif;
  }

  .combo svg {
    grid-area: 1 / 2;
    width: 15px;
    height: 15px;
    background: linear-gradient(#9cc8ff, #3c7ce0);
    pointer-events: none;
  }

  .selbtn {
    width: 22px;
  }

  .selbtn.wide {
    width: 26px;
  }

  .selbtn svg {
    width: 18px;
    height: 18px;
  }

  .last {
    margin-left: auto;
    width: 18px;
    padding-bottom: 6px;
  }

  .status {
    display: flex;
    height: 20px;
    border-bottom: 1px solid #888;
    box-shadow: inset 0 1px #f0f0f0;
  }

  .status p {
    flex: 1;
    margin: 0;
    padding-left: 2px;
    font-size: 13px;
    font-weight: bold;
    line-height: 19px;
  }

  .cell {
    width: 610px;
    border-left: 1px solid #aaa;
    box-shadow: inset 1px 0 #f4f4f4;
  }

  .cell.small {
    width: 19px;
  }

  .cell.tail {
    width: 37px;
  }

  .strip {
    position: relative;
    height: 17px;
    background: linear-gradient(#a8a8a8 0 5px, #eee 5px 7px, #d4d4d4 7px 10px, #f0f0f0 10px 11px, #aaa 11px 15px, #444 15px);
  }

  .scroller {
    position: absolute;
    top: 0;
    left: 0;
    z-index: 2;
    display: flex;
    height: 19px;
    border: 1px solid #666;
    border-left: 0;
  }

  .scroller button {
    width: 19px;
    background: #e6e6e6;
  }

  .scroller svg {
    width: 12px;
    height: 12px;
  }

  .track {
    width: 65px;
    background: linear-gradient(#2c3c60, #1c2840 50%, #000 60%);
  }

  .work {
    display: flex;
    flex: 1;
  }

  aside {
    display: flex;
    flex-direction: column;
    gap: 1px;
    padding: 15px 0 0 6px;
    background: #adadad;
  }

  .tab {
    width: 26px;
    height: 41px;
    box-sizing: border-box;
    border: 1px solid #666;
    border-right-color: #999;
    background: #d8d8d8;
    box-shadow: inset 1px 1px #f4f4f4;
  }

  .tab.gap {
    margin-top: 12px;
  }

  .edge {
    box-sizing: border-box;
    width: 11px;
    border-left: 1px solid #888;
    border-right: 1px solid #555;
    background: #ececec;
  }

  main {
    position: relative;
    flex: 1;
    margin-right: 1px;
    border: 1px solid #ff6a00;
    border-left-width: 2px;
    background: linear-gradient(#97bedc, #e6e6e6 72%);
    overflow: hidden;
  }

  .scene {
    position: absolute;
    width: 100%;
    height: 100%;
  }

  .axis {
    font: 12px 'Liberation Sans', sans-serif;
  }

  .note {
    position: absolute;
    top: 135px;
    left: 49px;
    box-sizing: border-box;
    width: 252px;
    height: 58px;
    padding: 2px 0 0 3px;
    background: #fff;
    color: #f00;
    font-size: 20px;
    font-style: italic;
    line-height: 30px;
  }

  .triad {
    position: absolute;
    bottom: 37px;
    left: 19px;
    width: 70px;
    height: 80px;
  }

  .camera {
    position: absolute;
    bottom: 0;
    left: 3px;
    color: #ff6a00;
    font: bold 14px/16px Roboto, sans-serif;
  }
</style>
